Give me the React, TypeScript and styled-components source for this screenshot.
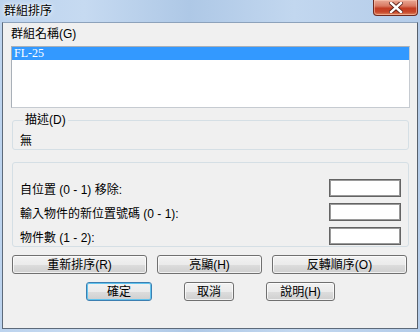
import styled, { createGlobalStyle } from "styled-components";

const GlobalStyle = createGlobalStyle`
  html, body {
    margin: 0;
    padding: 0;
    background: #ffffff;
  }
  * {
    box-sizing: border-box;
  }
`;

const uiFont = `"Liberation Sans", "Noto Sans CJK TC", sans-serif`;

const Window = styled.div`
  width: 420px;
  height: 332px;
  display: flex;
  flex-direction: column;
  padding: 0 2px 3px 2px;
  background: linear-gradient(
    90deg,
    #bcd3ee 0%,
    #c6daf1 20%,
    #aec8e6 45%,
    #c2d7ef 70%,
    #b4cce9 100%
  );
  font-family: ${uiFont};
  font-size: 12px;
  color: #000;
`;

const TitleBar = styled.div`
  height: 22px;
  display: flex;
  align-items: flex-start;
  justify-content: space-between;
`;

const Title = styled.span`
  padding: 4px 0 0 2px;
  line-height: 14px;
  font-size: 12px;
  text-shadow: 0 0 6px #ffffff, 0 0 3px #ffffff;
`;

const CloseButton = styled.div`
  width: 45px;
  height: 16px;
  margin-right: 0px;
  display: flex;
  align-items: center;
  justify-content: center;
  border: 1px solid #6e2a20;
  border-top: none;
  border-radius: 0 0 4px 4px;
  background: linear-gradient(
    180deg,
    #e9a996 0%,
    #d97a63 40%,
    #c33d22 55%,
    #c8472a 80%,
    #de8a63 100%
  );
  box-shadow: inset 0 0 0 1px rgba(255, 210, 190, 0.5);
`;

const Client = styled.div`
  flex: 1;
  display: flex;
  flex-direction: column;
  background: #f0f0f0;
  border: 1px solid #5d6a7a;
  border-top-color: #8da2bb;
  border-right-color: #56606c;
  padding: 0 8px 0 8px;
`;

const FieldLabel = styled.div`
  margin-top: 4px;
  line-height: 14px;
`;

const ListBox = styled.div`
  margin-top: 5px;
  width: 399px;
  height: 62px;
  background: #ffffff;
  border: 1px solid #c6cbd1;
  border-left-color: #a9b0b8;
  border-top-color: #a9b0b8;
`;

const ListItem = styled.div<{ $selected?: boolean }>`
  height: 13px;
  line-height: 13px;
  padding-left: 2px;
  font-family: "Liberation Serif", "Noto Sans CJK TC", serif;
  font-size: 12px;
  background: ${(p) => (p.$selected ? "#3399ff" : "transparent")};
  color: ${(p) => (p.$selected ? "#ffffff" : "#000000")};
`;

const GroupBox = styled.fieldset<{ $top: number }>`
  margin: ${(p) => p.$top}px 0 0 1px;
  width: 397px;
  padding: 0 7px 1px 7px;
  border: 1px solid #d5dfe5;
  border-radius: 3px;
  min-inline-size: 0;
`;

const Legend = styled.legend`
  padding: 0 2px;
  margin-left: 3px;
  line-height: 16px;
  font-size: 12px;
`;

const Description = styled.div`
  padding: 6px 0 0 0;
  line-height: 14px;
`;

const FormRows = styled.div`
  display: flex;
  flex-direction: column;
  gap: 6px;
  padding: 16px 0 0 0;
`;

const FormRow = styled.div`
  display: flex;
  align-items: center;
  justify-content: space-between;
  height: 18px;
`;

const TextInput = styled.div`
  width: 72px;
  height: 18px;
  background: #ffffff;
  border: 1px solid #646464;
  box-shadow: inset 0 0 0 1px #9a9a9a;
`;

const ButtonRow = styled.div<{ $top: number; $pad: number; $gap: number }>`
  display: flex;
  margin-top: ${(p) => p.$top}px;
  padding-left: ${(p) => p.$pad}px;
  gap: ${(p) => p.$gap}px;
`;

const Button = styled.div<{ $width: number; $default?: boolean }>`
  width: ${(p) => p.$width}px;
  height: 19px;
  display: flex;
  align-items: center;
  justify-content: center;
  border: 1px solid ${(p) => (p.$default ? "#3c7fb1" : "#707070")};
  border-radius: 3px;
  background: linear-gradient(
    180deg,
    #f2f2f2 0%,
    #ebebeb 50%,
    #dddddd 51%,
    #cfcfcf 100%
  );
  box-shadow: inset 0 0 0 1px
    ${(p) => (p.$default ? "#62c4ee" : "rgba(255,255,255,0.7)")};
  line-height: 14px;
  font-size: 12px;
`;

export default function App() {
  return (
    <>
      <GlobalStyle />
      <Window>
        <TitleBar>
          <Title>群組排序</Title>
          <CloseButton>
            <svg width="14" height="11" viewBox="0 0 14 11">
              <path
                d="M2 1 L12 10 M12 1 L2 10"
                stroke="#5a2018"
                strokeWidth="4.2"
                strokeLinecap="square"
              />
              <path
                d="M2 1 L12 10 M12 1 L2 10"
                stroke="#ffffff"
                strokeWidth="2.4"
                strokeLinecap="square"
              />
            </svg>
          </CloseButton>
        </TitleBar>
        <Client>
          <FieldLabel>群組名稱(G)</FieldLabel>
          <ListBox>
            <ListItem $selected>FL-25</ListItem>
          </ListBox>

          <GroupBox $top={4}>
            <Legend>描述(D)</Legend>
            <Description>無</Description>
          </GroupBox>

          <GroupBox $top={12}>
            <FormRows>
              <FormRow>
                <span>自位置 (0 - 1) 移除:</span>
                <TextInput />
              </FormRow>
              <FormRow>
                <span>輸入物件的新位置號碼 (0 - 1):</span>
                <TextInput />
              </FormRow>
              <FormRow>
                <span>物件數 (1 - 2):</span>
                <TextInput />
              </FormRow>
            </FormRows>
          </GroupBox>

          <ButtonRow $top={8} $pad={1} $gap={10}>
            <Button $width={135}>重新排序(R)</Button>
            <Button $width={105}>亮顯(H)</Button>
            <Button $width={135}>反轉順序(O)</Button>
          </ButtonRow>

          <ButtonRow $top={8} $pad={75} $gap={32}>
            <Button $width={66} $default>
              確定
            </Button>
            <Button $width={50}>取消</Button>
            <Button $width={69}>說明(H)</Button>
          </ButtonRow>
        </Client>
      </Window>
    </>
  );
}
